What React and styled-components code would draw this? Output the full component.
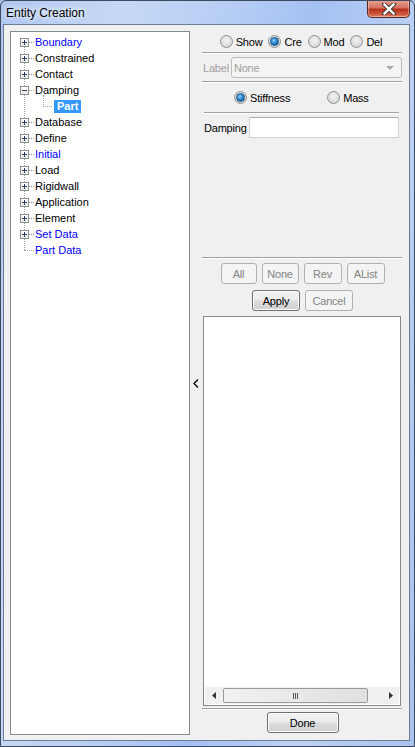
import React from "react";
import styled, { createGlobalStyle } from "styled-components";

const Global = createGlobalStyle`
  html, body { margin: 0; padding: 0; }
  body { background: #a9c2ea; font-family: "Liberation Sans", "DejaVu Sans", sans-serif; font-size: 11px; }
  * { box-sizing: border-box; }
`;

const Frame = styled.div`
  width: 415px;
  height: 747px;
  display: flex;
  flex-direction: column;
  background: linear-gradient(100deg, #aec6ef 0%, #c6d8f5 22%, #b4ccf4 45%, #a4c0f3 58%, #bcd1f4 78%, #a9c3ee 100%);
  border: 1px solid #3c4a60;
  border-radius: 6px 6px 0 0;
  position: relative;
  overflow: hidden;
`;

const TitleBar = styled.div`
  height: 23px;
  flex: none;
  display: flex;
  align-items: center;
  padding-left: 5px;
  font-family: "Liberation Sans", "DejaVu Sans", sans-serif;
  font-size: 12px;
  color: #000;
  text-shadow: 0 0 8px #fff, 0 0 4px #fff;
`;

const CloseBtn = styled.div`
  position: absolute;
  top: -1px;
  right: 4px;
  width: 43px;
  height: 18px;
  border: 1px solid #5a2520;
  border-top: none;
  border-radius: 0 0 5px 5px;
  background: linear-gradient(#e8a493 0%, #d3715f 45%, #b7321d 55%, #cf5a3f 85%, #e48a6e 100%);
  display: flex;
  align-items: center;
  justify-content: center;
  box-shadow: inset 0 0 0 1px rgba(255,255,255,0.35);
`;

const Client = styled.div`
  flex: 1;
  margin: 0 4px 5px 2px;
  border: 1px solid #6e7c93;
  background: #f0f0f0;
  display: flex;
  padding: 6px 7px 5px 6px;
`;

const TreeBox = styled.div`
  width: 180px;
  height: 704px;
  border: 1px solid #828790;
  background: #fff;
  padding: 2px 0 0 9px;
  flex: none;
`;

const TreeRow = styled.div`
  height: 16px;
  display: flex;
  align-items: center;
  position: relative;
  padding-left: ${p => p.$indent || 0}px;
`;

const Expander = styled.div`
  width: 9px;
  height: 9px;
  border: 1px solid #919191;
  background: linear-gradient(#fff, #e6e6e6);
  position: relative;
  flex: none;
  z-index: 1;
  &::before {
    content: "";
    position: absolute;
    left: 1px; right: 1px; top: 3px; height: 1px;
    background: #2e3f66;
  }
  &::after {
    content: "";
    position: absolute;
    top: 1px; bottom: 1px; left: 3px; width: 1px;
    background: #2e3f66;
    display: ${p => (p.$open ? "none" : "block")};
  }
`;

const HDots = styled.div`
  width: ${p => p.$w}px;
  height: 1px;
  margin-left: ${p => p.$ml || 0}px;
  border-top: 1px dotted #a0a0a0;
  flex: none;
`;

const VLine = styled.div`
  position: absolute;
  left: ${p => p.$left}px;
  top: ${p => p.$top}px;
  width: 1px;
  height: ${p => p.$h}px;
  border-left: 1px dotted #a0a0a0;
`;

const TreeLabel = styled.span`
  margin-left: 0;
  color: ${p => (p.$blue ? "#0000ff" : "#000")};
  font-size: 11px;
  white-space: nowrap;
  padding: 0 1px;
  line-height: 15px;
  ${p => p.$sel && `margin-left:2px;background:#3399ff;color:#fff;font-weight:bold;padding:0 3px;line-height:13px;`}
`;

const TreeInner = styled.div`
  position: relative;
`;

const Splitter = styled.div`
  width: 13px;
  flex: none;
  display: flex;
  align-items: center;
  justify-content: center;
  padding-right: 2px;
`;

const Right = styled.div`
  width: 199px;
  flex: none;
  display: flex;
  flex-direction: column;
  font-size: 11px;
  letter-spacing: -0.2px;
  color: #000;
`;

const RadioRow = styled.div`
  display: flex;
  align-items: center;
  justify-content: ${p => (p.$start ? "flex-start" : "center")};
  height: ${p => p.$h}px;
  gap: ${p => p.$gap || 0}px;
  padding: ${p => p.$pad || "0"};
  flex: none;
`;

const RadioItem = styled.label`
  display: flex;
  align-items: center;
  gap: 3px;
`;

const RadioCircle = styled.span`
  width: 13px;
  height: 13px;
  border-radius: 50%;
  border: 1px solid #8e8f8f;
  background: radial-gradient(circle at 50% 40%, #f4f4f4 0%, #dcdcdc 60%, #cfcfcf 100%);
  display: flex;
  align-items: center;
  justify-content: center;
  flex: none;
  &::after {
    content: "";
    width: 7px;
    height: 7px;
    border-radius: 50%;
    display: ${p => (p.$on ? "block" : "none")};
    background: radial-gradient(circle at 40% 35%, #8fd3ff 0%, #2a8ad4 45%, #0b4f8f 100%);
    border: 1px solid #1d4f7e;
  }
`;

const Sep = styled.div`
  height: 2px;
  flex: none;
  border-top: 1px solid #a0a0a0;
  border-bottom: 1px solid #fff;
  margin: ${p => p.$m || "0 0 0 -1px"};
`;

const LabelRow = styled.div`
  display: flex;
  align-items: center;
  height: 21px;
  margin: 3px 0;
  gap: 2px;
  flex: none;
`;

const GrayText = styled.span`
  color: #a0a0a0;
`;

const Combo = styled.div`
  flex: 1;
  height: 21px;
  border: 1px solid #bcbcbc;
  border-radius: 3px;
  background: #f4f4f4;
  display: flex;
  align-items: center;
  padding-left: 2px;
  color: #a0a0a0;
  justify-content: space-between;
  padding-right: 7px;
`;

const Caret = styled.span`
  width: 0;
  height: 0;
  border-left: 4px solid transparent;
  border-right: 4px solid transparent;
  border-top: 4px solid #a8a8a8;
`;

const FieldRow = styled.div`
  display: flex;
  align-items: center;
  height: 21px;
  margin: 3px 3px 0 1px;
  gap: 4px;
  flex: none;
`;

const FieldLabel = styled.span`
  width: 41px;
  flex: none;
  white-space: nowrap;
`;

const TextInput = styled.div`
  flex: 1;
  height: 21px;
  border: 1px solid #d3d3d3;
  border-top-color: #abadb3;
  background: #fff;
`;

const Spacer = styled.div`
  flex: 1;
`;

const BtnRow = styled.div`
  display: flex;
  justify-content: center;
  gap: ${p => p.$gap || 5}px;
  margin: ${p => p.$m || "0"};
  flex: none;
`;

const Btn = styled.div`
  width: ${p => p.$w}px;
  height: 21px;
  border: 1px solid ${p => (p.$disabled ? "#adb2b5" : "#707070")};
  border-radius: 3px;
  display: flex;
  align-items: center;
  justify-content: center;
  color: ${p => (p.$disabled ? "#838383" : "#000")};
  background: ${p =>
    p.$disabled
      ? "#f4f4f4"
      : "linear-gradient(#f2f2f2 0%, #ebebeb 48%, #dddddd 52%, #cfcfcf 100%)"};
  box-shadow: ${p => (p.$disabled ? "none" : "inset 0 0 0 1px #fcfcfc")};
  font-size: 11px;
`;

const ListBox = styled.div`
  height: 390px;
  flex: none;
  margin: 5px 1px 0 0;
  border: 1px solid #828790;
  background: #fff;
  display: flex;
  flex-direction: column;
  justify-content: flex-end;
  padding: 0 1px 1px 1px;
`;

const HScroll = styled.div`
  height: 17px;
  display: flex;
  align-items: center;
  background: #f0f0f0;
`;

const ScrollArrow = styled.div`
  width: 17px;
  height: 17px;
  display: flex;
  align-items: center;
  justify-content: center;
  flex: none;
`;

const Track = styled.div`
  flex: 1;
  display: flex;
  height: 17px;
  align-items: center;
  padding: 0 0 0 1px;
`;

const Thumb = styled.div`
  width: 145px;
  height: 15px;
  border: 1px solid #9a9a9a;
  border-radius: 2px;
  background: linear-gradient(90deg, #f1f1f1, #e0e0e0);
  display: flex;
  align-items: center;
  justify-content: center;
  gap: 1px;
`;

const Grip = styled.span`
  width: 1px;
  height: 6px;
  background: #555;
`;

const BottomRow = styled.div`
  display: flex;
  justify-content: center;
  margin: 2px 0 2px 0;
  flex: none;
`;

const tree = [
  { t: "Boundary", blue: true },
  { t: "Constrained" },
  { t: "Contact" },
  { t: "Damping", open: true },
  { t: "Part", child: true },
  { t: "Database" },
  { t: "Define" },
  { t: "Initial", blue: true },
  { t: "Load" },
  { t: "Rigidwall" },
  { t: "Application" },
  { t: "Element" },
  { t: "Set Data", blue: true },
  { t: "Part Data", blue: true, leaf: true },
];

function Radio({ on, children }) {
  return (
    <RadioItem>
      <RadioCircle $on={on} />
      <span>{children}</span>
    </RadioItem>
  );
}

export default function App() {
  return (
    <>
      <Global />
      <Frame>
        <TitleBar>Entity Creation</TitleBar>
        <CloseBtn>
          <svg width="14" height="12" viewBox="0 0 14 12">
            <path d="M2 1 L12 11 M12 1 L2 11" stroke="#3b3b3b" strokeWidth="4.2" strokeLinecap="square" />
            <path d="M2.5 1.5 L11.5 10.5 M11.5 1.5 L2.5 10.5" stroke="#fff" strokeWidth="2.4" strokeLinecap="square" />
          </svg>
        </CloseBtn>
        <Client>
          <TreeBox>
            <TreeInner>
              <VLine $left={4} $top={8} $h={208} />
              <VLine $left={23} $top={61} $h={10} />
              {tree.map(it => (
                <TreeRow key={it.t} $indent={it.child ? 23 : 0}>
                  {it.child ? (
                    <>
                      <HDots $w={9} />
                      <TreeLabel $sel>{it.t}</TreeLabel>
                    </>
                  ) : it.leaf ? (
                    <>
                      <HDots $w={10} $ml={4} />
                      <TreeLabel $blue>{it.t}</TreeLabel>
                    </>
                  ) : (
                    <>
                      <Expander $open={it.open} />
                      <HDots $w={5} />
                      <TreeLabel $blue={it.blue}>{it.t}</TreeLabel>
                    </>
                  )}
                </TreeRow>
              ))}
            </TreeInner>
          </TreeBox>
          <Splitter>
            <svg width="6" height="9" viewBox="0 0 6 9">
              <path d="M5 0.5 L1 4.5 L5 8.5" stroke="#000" strokeWidth="1.3" fill="none" />
            </svg>
          </Splitter>
          <Right>
            <RadioRow $h={21} $gap={6} $pad="0 3px 0 0">
              <Radio>Show</Radio>
              <Radio on>Cre</Radio>
              <Radio>Mod</Radio>
              <Radio>Del</Radio>
            </RadioRow>
            <Sep />
            <LabelRow>
              <GrayText>Label</GrayText>
              <Combo>
                <span>None</span>
                <Caret />
              </Combo>
            </LabelRow>
            <Sep />
            <RadioRow $h={29} $start $gap={37} $pad="0 0 0 31px">
              <Radio on>Stiffness</Radio>
              <Radio>Mass</Radio>
            </RadioRow>
            <Sep $m="0 3px 0 1px" />
            <FieldRow>
              <FieldLabel>Damping</FieldLabel>
              <TextInput />
            </FieldRow>
            <Spacer />
            <Sep />
            <BtnRow $m="4px 0 0 0">
              <Btn $w={36} $disabled>All</Btn>
              <Btn $w={37} $disabled>None</Btn>
              <Btn $w={38} $disabled>Rev</Btn>
              <Btn $w={38} $disabled>AList</Btn>
            </BtnRow>
            <BtnRow $m="6px 0 0 0">
              <Btn $w={48} $primary>Apply</Btn>
              <Btn $w={48} $disabled>Cancel</Btn>
            </BtnRow>
            <ListBox>
              <HScroll>
                <ScrollArrow>
                  <svg width="4" height="7" viewBox="0 0 4 7"><path d="M4 0 L0 3.5 L4 7 Z" fill="#333" /></svg>
                </ScrollArrow>
                <Track>
                  <Thumb>
                    <Grip /><Grip /><Grip />
                  </Thumb>
                </Track>
                <ScrollArrow>
                  <svg width="4" height="7" viewBox="0 0 4 7"><path d="M0 0 L4 3.5 L0 7 Z" fill="#333" /></svg>
                </ScrollArrow>
              </HScroll>
            </ListBox>
            <Sep $m="2px 0 0 -1px" />
            <BottomRow>
              <Btn $w={72}>Done</Btn>
            </BottomRow>
          </Right>
        </Client>
      </Frame>
    </>
  );
}
